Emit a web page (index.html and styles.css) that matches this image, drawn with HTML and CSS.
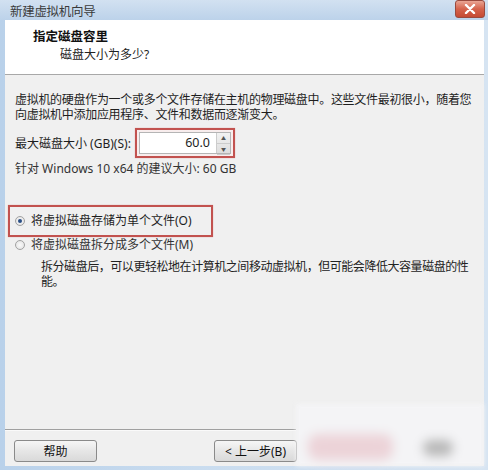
FILE: index.html
```html
<!DOCTYPE html>
<html lang="zh-CN">
  <head>
    <meta charset="UTF-8" />
    <title>新建虚拟机向导</title>
    <link rel="stylesheet" href="styles.css">
  </head>
  <body>
    <div class="window">
      <div class="titlebar">
        <span class="title">新建虚拟机向导</span>
        <span class="close-btn">
          <svg width="12" height="10" viewBox="0 0 12 10">
            <path d="M2 1 L10 9 M10 1 L2 9" stroke="#fff" stroke-width="2.4" stroke-linecap="round" />
          </svg>
        </span>
      </div>
      <div class="client">
        <div class="header">
          <div class="heading">指定磁盘容里</div>
          <div class="subheading">磁盘大小为多少?</div>
        </div>
        <div class="content">
          <p class="intro">虚拟机的硬盘作为一个或多个文件存储在主机的物理磁盘中。这些文件最初很小，随着您向虚拟机中添加应用程序、文件和数据而逐渐变大。</p>
          <div class="size-row">
            <label>最大磁盘大小 (GB)(S):</label>
            <div class="highlight spin-wrap">
              <div class="spinbox">
                <span class="spin-value">60.0</span>
                <span class="spin-arrows">
                  <span class="arrow">▲</span>
                  <span class="arrow">▼</span>
                </span>
              </div>
            </div>
          </div>
          <div class="hint">针对 Windows 10 x64 的建议大小: 60 GB</div>

          <div class="highlight radio-box">
            <div class="radio-row">
              <span class="radio checked"></span>
              <span>将虚拟磁盘存储为单个文件(O)</span>
            </div>
          </div>
          <div class="radio-row second">
            <span class="radio"></span>
            <span>将虚拟磁盘拆分成多个文件(M)</span>
          </div>
          <p class="note">拆分磁盘后，可以更轻松地在计算机之间移动虚拟机，但可能会降低大容量磁盘的性能。</p>
        </div>
        <div class="footer">
          <div class="footer-line"></div>
          <div class="buttons">
            <button class="btn">帮助</button>
            <button class="btn back">&lt; 上一步(B)</button>
          </div>
        </div>
        <div class="blur-patch">
          <span class="blur-pink"></span>
          <span class="blur-gray"></span>
        </div>
      </div>
    </div>
  </body>
</html>
```

FILE: styles.css
```css
body {
  margin: 0;
  font-family: "Noto Sans", "Noto Sans CJK SC", sans-serif;
  font-size: 12px;
  color: #1e1e1e;
}

.window {
  width: 488px;
  height: 470px;
  display: flex;
  flex-direction: column;
  background: linear-gradient(to right, #b9d1ea, #c9dcef 40%, #d6e4f2);
  position: relative;
  overflow: hidden;
}

.titlebar {
  height: 20px;
  display: flex;
  align-items: center;
  justify-content: space-between;
  padding: 0 3px 0 10px;
  background: linear-gradient(to bottom, #d2e1f1, #bcd2ea);
}

.title {
  color: #3a3a3a;
  font-size: 12.5px;
  letter-spacing: -0.3px;
}

.close-btn {
  width: 28px;
  height: 16px;
  margin-top: -2px;
  display: flex;
  align-items: center;
  justify-content: center;
  border-radius: 3px;
  border: 1px solid #9a4a3e;
  background: linear-gradient(to bottom, #e9a594, #d5634c 50%, #c54a33);
}

.client {
  flex: 1;
  margin: 0 4px 4px 5px;
  background: #f0f0f0;
  display: flex;
  flex-direction: column;
  position: relative;
}

.header {
  height: 55px;
  background: #fff;
  border-bottom: 1px solid #a8a8a8;
  padding: 9px 0 0 28px;
  box-sizing: border-box;
}

.heading {
  font-weight: bold;
  font-size: 12.5px;
  color: #111;
  line-height: 15px;
}

.subheading {
  margin: 3px 0 0 27px;
  line-height: 16px;
  color: #222;
}

.content {
  flex: 1;
  padding: 17px 8px 0 10px;
}

.intro {
  margin: 0;
  line-height: 15px;
  letter-spacing: -0.3px;
}

.size-row {
  display: flex;
  align-items: center;
  margin-top: 6px;
}

.size-row label {
  width: 120px;
}

.highlight {
  border: 2px solid #c2524f;
  box-shadow: 0 0 1px #e0a0a0;
}

.spin-wrap {
  padding: 2px;
  background: #f8eded;
}

.spinbox {
  width: 90px;
  height: 20px;
  display: flex;
  background: #fff;
  border: 1px solid #b5b5b5;
}

.spin-value {
  flex: 1;
  text-align: right;
  padding-right: 6px;
  line-height: 20px;
  font-size: 12.5px;
}

.spin-arrows {
  width: 13px;
  display: flex;
  flex-direction: column;
  border-left: 1px solid #ccc;
  background: linear-gradient(to bottom, #f2f2f2, #dedede);
}

.arrow {
  flex: 1;
  font-size: 5px;
  line-height: 10px;
  text-align: center;
  color: #555;
  border-bottom: 1px solid #ccc;
}

.hint {
  margin-top: 3px;
  color: #333;
  line-height: 15px;
}

.radio-box {
  margin: 29px 0 0 -7px;
  height: 32px;
  width: 205px;
  display: flex;
  align-items: center;
  padding-left: 5px;
  box-sizing: border-box;
}

.radio-row {
  display: flex;
  align-items: center;
  gap: 6px;
  line-height: 16px;
}

.radio-row.second {
  color: #333;
}

.radio {
  width: 10px;
  height: 10px;
  border-radius: 50%;
  border: 1px solid #a2a2a2;
  background: radial-gradient(circle, #fafafa, #e0e0e0);
  box-sizing: border-box;
  position: relative;
}

.radio.checked::after {
  content: "";
  position: absolute;
  left: 2px;
  top: 2px;
  width: 4px;
  height: 4px;
  border-radius: 50%;
  background: #2a4f85;
}

.note {
  margin: 6px 0 0 26px;
  line-height: 15px;
  letter-spacing: -0.45px;
  color: #222;
}

.footer-line {
  width: 291px;
  border-top: 1px solid #a0a0a0;
  border-bottom: 1px solid #fafafa;
}

.buttons {
  display: flex;
  gap: 117px;
  padding: 9px 0 4px 9px;
}

.btn {
  width: 83px;
  height: 22px;
  font: inherit;
  color: #111;
  border: 1px solid #8a8a8a;
  border-radius: 3px;
  background: linear-gradient(to bottom, #f6f6f6, #e6e6e6 50%, #d9d9d9);
  padding: 0;
}

.blur-patch {
  position: absolute;
  left: 291px;
  bottom: 0;
  width: 188px;
  height: 62px;
  background: #f4f4f6;
  filter: blur(2px);
}

.blur-pink {
  position: absolute;
  left: 12px;
  top: 30px;
  width: 85px;
  height: 26px;
  border-radius: 10px;
  background: #ecd3d8;
  filter: blur(5px);
}

.blur-gray {
  position: absolute;
  left: 127px;
  top: 36px;
  width: 30px;
  height: 16px;
  border-radius: 8px;
  background: #b8b8b8;
  filter: blur(5px);
}
```
